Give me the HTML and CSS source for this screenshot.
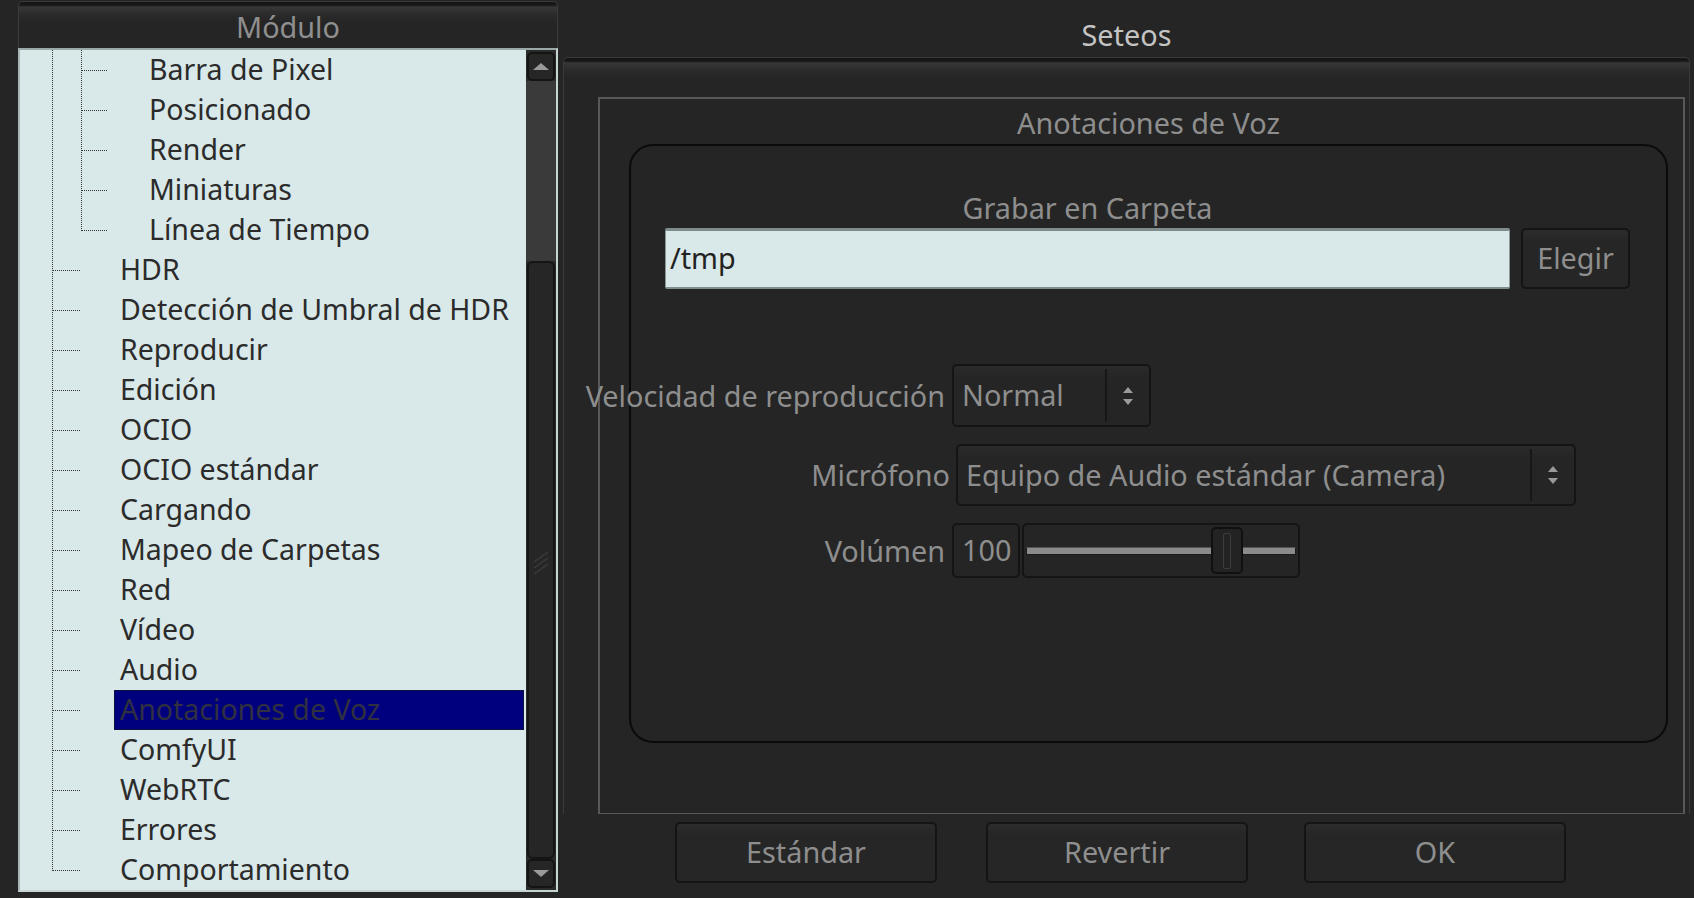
FILE: index.html
```html
<!DOCTYPE html>
<html>
	<head>
		<meta charset="utf-8">
		<title>Seteos</title>
		<link rel="stylesheet" href="styles.css">
	</head>
	<body>
		<div class="window">
			<div class="modules">
				<div class="modules-head">Módulo</div>
				<div class="tree-box">
					<div class="tree">
						<div class="row sub">Barra de Pixel</div>
						<div class="row sub">Posicionado</div>
						<div class="row sub">Render</div>
						<div class="row sub">Miniaturas</div>
						<div class="row sub end">Línea de Tiempo</div>
						<div class="row">HDR</div>
						<div class="row">Detección de Umbral de HDR</div>
						<div class="row">Reproducir</div>
						<div class="row">Edición</div>
						<div class="row">OCIO</div>
						<div class="row">OCIO estándar</div>
						<div class="row">Cargando</div>
						<div class="row">Mapeo de Carpetas</div>
						<div class="row">Red</div>
						<div class="row">Vídeo</div>
						<div class="row">Audio</div>
						<div class="row sel"><span class="sel-box">Anotaciones de Voz</span></div>
						<div class="row">ComfyUI</div>
						<div class="row">WebRTC</div>
						<div class="row">Errores</div>
						<div class="row end">Comportamiento</div>
					</div>
					<div class="scrollbar">
						<div class="sb-btn"><span class="tri-up"></span></div>
						<div class="sb-track"></div>
						<div class="sb-handle">
							<svg width="16" height="40" viewBox="0 0 16 40">
								<path d="M1 22 L15 12 M1 28 L15 18 M1 34 L15 24" stroke="#3c3c3c" stroke-width="1.5" fill="none"/>
							</svg>
						</div>
						<div class="sb-btn"><span class="tri-down"></span></div>
					</div>
				</div>
			</div>

			<div class="settings">
				<div class="settings-title">Seteos</div>
				<div class="frame">
					<div class="group">
						<div class="group-title">Anotaciones de Voz</div>
						<div class="panel">
							<div class="folder">
								<div class="folder-col">
									<div class="caption">Grabar en Carpeta</div>
									<div class="path">/tmp</div>
								</div>
								<div class="btn choose">Elegir</div>
							</div>
							<div class="form">
								<div class="label">Velocidad de reproducción</div>
								<div class="combo speed">
									<span class="combo-text">Normal</span>
									<span class="combo-arrows"><i class="a-up"></i><i class="a-down"></i></span>
								</div>
								<div class="label mic">Micrófono</div>
								<div class="combo mic-combo">
									<span class="combo-text">Equipo de Audio estándar (Camera)</span>
									<span class="combo-arrows"><i class="a-up"></i><i class="a-down"></i></span>
								</div>
								<div class="label">Volúmen</div>
								<div class="volume">
									<div class="vol-value">100</div>
									<div class="slider">
										<div class="groove"></div>
										<div class="thumb"><span class="thumb-line"></span></div>
									</div>
								</div>
							</div>
						</div>
					</div>
				</div>
				<div class="buttons">
					<div class="btn big">Estándar</div>
					<div class="btn big">Revertir</div>
					<div class="btn big ok">OK</div>
				</div>
			</div>
		</div>
	</body>
</html>
```

FILE: styles.css
```css
*{
	padding: 0;
	margin: 0;
	box-sizing: border-box;
}
body{
	background: #252525;
	font: 28.8px/40px "Noto Sans", "Open Sans", sans-serif;
	color: #8e8e8e;
	overflow: hidden;
}
.window{
	display: flex;
	height: 898px;
	padding: 1px 0 0 18px;
}

/* left: module tree */
.modules{
	width: 540px;
	display: flex;
	flex-direction: column;
}
.modules-head{
	height: 47px;
	border: 1px solid #3a3a3a;
	border-bottom: none;
	border-radius: 5px 5px 0 0;
	background: linear-gradient(to bottom, #161616 0, #161616 3px, #373737 5px, #2b2b2b 12px, #252525 20px);
	text-align: center;
	line-height: 50px;
	color: #8f8f8f;
}
.tree-box{
	height: 844px;
	display: flex;
	border: 2px solid #c6d4d4;
	border-top-color: #9aa8a8;
	border-left-color: #a9b6b6;
	background: #d9e8e8;
}
.tree{
	flex: 1;
	overflow: hidden;
	color: #2b2b2b;
	font-size: 28.5px;
}
.row{
	height: 40px;
	line-height: 38px;
	padding-left: 100px;
	white-space: nowrap;
	background-image:
		repeating-linear-gradient(to bottom, #353535 0, #353535 1px, transparent 1px, transparent 2px),
		repeating-linear-gradient(to right, #353535 0, #353535 1px, transparent 1px, transparent 2px);
	background-size: 1px 100%, 27px 1px;
	background-position: 32px 0, 33px 20px;
	background-repeat: no-repeat;
}
.row.end{
	background-size: 1px 21px, 27px 1px;
}
.row.sub{
	padding-left: 129px;
	background-image:
		repeating-linear-gradient(to bottom, #353535 0, #353535 1px, transparent 1px, transparent 2px),
		repeating-linear-gradient(to bottom, #353535 0, #353535 1px, transparent 1px, transparent 2px),
		repeating-linear-gradient(to right, #353535 0, #353535 1px, transparent 1px, transparent 2px);
	background-size: 1px 100%, 1px 100%, 26px 1px;
	background-position: 32px 0, 61px 0, 62px 20px;
}
.row.sub.end{
	background-size: 1px 100%, 1px 21px, 26px 1px;
}
.row.sel{
	padding-left: 94px;
	padding-right: 2px;
}
.sel-box{
	display: block;
	height: 40px;
	padding-left: 5px;
	line-height: 36px;
	background: #00007f;
	border: 1px solid #101040;
	color: #303040;
}

.scrollbar{
	width: 30px;
	display: flex;
	flex-direction: column;
	background: #2a2a2a;
	padding: 2px 1px;
}
.sb-btn{
	height: 29px;
	background: #262626;
	border: 2px solid #141414;
	border-radius: 5px;
	display: flex;
	align-items: center;
	justify-content: center;
}
.tri-up{
	border-left: 8px solid transparent;
	border-right: 8px solid transparent;
	border-bottom: 7px solid #9a9a9a;
}
.tri-down{
	border-left: 8px solid transparent;
	border-right: 8px solid transparent;
	border-top: 7px solid #9a9a9a;
}
.sb-track{
	height: 180px;
	background: #3a3a3a;
	margin: 0 -1px;
}
.sb-handle{
	flex: 1;
	background: #262626;
	border: 2px solid #151515;
	border-radius: 6px;
	display: flex;
	align-items: center;
	justify-content: center;
}

/* right: settings */
.settings{
	width: 1127px;
	margin-left: 5px;
	display: flex;
	flex-direction: column;
}
.settings-title{
	height: 56px;
	padding-top: 14px;
	text-align: center;
	color: #c4c4c4;
}
.frame{
	height: 757px;
	border: 1px solid #3a3a3a;
	border-bottom: none;
	border-radius: 5px 5px 0 0;
	background: linear-gradient(to bottom, #161616 0, #161616 3px, #373737 5px, #2b2b2b 12px, #252525 20px);
	padding: 39px 4px 0 34px;
	display: flex;
}
.group{
	flex: 1;
	border: 2px solid #585858;
	border-bottom-width: 1px;
}
.group-title{
	height: 45px;
	padding-top: 4px;
	margin: 0 15px 0 29px;
	text-align: center;
}
.panel{
	height: 599px;
	margin: 0 15px 0 29px;
	border: 2px solid #0b0b0b;
	border-radius: 24px;
	padding-top: 44px;
}
.folder{
	display: flex;
	align-items: flex-end;
	gap: 11px;
	margin: 0 36px 0 34px;
}
.folder-col{
	flex: 1;
}
.caption{
	height: 38px;
	line-height: 35px;
	text-align: center;
}
.path{
	height: 61px;
	line-height: 54px;
	padding-left: 4px;
	background: #d9e8e8;
	border: 1px solid #8a9898;
	border-top: 3px solid #7f8d8d;
	border-bottom: 2px solid #7f8d8d;
	border-radius: 2px;
	color: #222;
}
.btn{
	background: linear-gradient(to bottom, #2c2c2c, #262626 12px);
	border: 2px solid #141414;
	border-radius: 5px;
	text-align: center;
	color: #8e8e8e;
}
.choose{
	width: 109px;
	height: 61px;
	line-height: 55px;
}

.form{
	display: grid;
	grid-template-columns: 314px auto;
	justify-content: start;
	align-items: center;
	column-gap: 7px;
	row-gap: 17px;
	margin-top: 75px;
}
.label{
	display: flex;
	justify-content: flex-end;
	white-space: nowrap;
}
.label.mic{
	margin-right: -5px;
}
.combo{
	display: flex;
	height: 63px;
	background: linear-gradient(to bottom, #2a2a2a, #252525 12px);
	border: 2px solid #141414;
	border-radius: 5px;
}
.speed{
	width: 199px;
}
.mic-combo{
	width: 620px;
	height: 62px;
	margin-left: 4px;
}
.combo-text{
	flex: 1;
	padding-left: 8px;
	line-height: 57px;
	white-space: nowrap;
}
.combo-arrows{
	width: 44px;
	margin: 3px 0;
	border-left: 2px solid #171717;
	display: flex;
	flex-direction: column;
	align-items: center;
	justify-content: center;
	gap: 6px;
}
.a-up{
	border-left: 5px solid transparent;
	border-right: 5px solid transparent;
	border-bottom: 6px solid #9a9a9a;
}
.a-down{
	border-left: 5px solid transparent;
	border-right: 5px solid transparent;
	border-top: 6px solid #9a9a9a;
}
.volume{
	display: flex;
	gap: 2px;
	height: 55px;
}
.vol-value{
	width: 68px;
	border: 2px solid #141414;
	border-radius: 5px;
	padding-left: 8px;
	line-height: 50px;
}
.slider{
	width: 278px;
	border: 2px solid #141414;
	border-radius: 5px;
	position: relative;
	display: flex;
	align-items: center;
	padding: 0 2px;
}
.groove{
	flex: 1;
	height: 8px;
	background: #8b8b8b;
	border: 1px solid #1a1a1a;
	border-top-color: #555;
}
.thumb{
	position: absolute;
	left: 187px;
	top: 2px;
	width: 32px;
	height: 47px;
	background: #232323;
	border: 2px solid #101010;
	border-radius: 5px;
	display: flex;
	justify-content: center;
	align-items: center;
}
.thumb-line{
	width: 8px;
	height: 36px;
	border: 1px solid #3c3c3c;
	border-radius: 2px;
}

.buttons{
	display: flex;
	gap: 49px;
	padding: 8px 0 0 112px;
}
.big{
	width: 262px;
	height: 61px;
	line-height: 56px;
}
.big.ok{
	margin-left: 7px;
}
```
